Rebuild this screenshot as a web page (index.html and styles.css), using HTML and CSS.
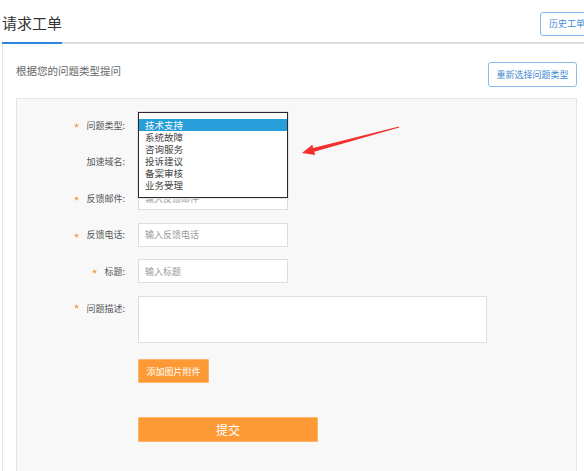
FILE: index.html
```html
<!DOCTYPE html>
<html lang="zh-CN">
<head>
<meta charset="utf-8">
<title>请求工单</title>
<link rel="stylesheet" href="styles.css">
</head>
<body>
<div class="page">
  <header class="header">
    <h1 class="title">请求工单</h1>
    <button class="btn-outline btn-history">历史工单</button>
  </header>
  <section class="panel">
    <div class="subrow">
      <p class="subtitle">根据您的问题类型提问</p>
      <button class="btn-outline btn-reselect">重新选择问题类型</button>
    </div>
    <div class="form-area">
      <div class="form-grid">
        <label class="label"><svg class="star" viewBox="0 0 10 10"><polygon points="5,0 6.2,3.6 10,3.6 6.9,5.8 8.1,9.5 5,7.2 1.9,9.5 3.1,5.8 0,3.6 3.8,3.6" fill="#f39a43"/></svg>问题类型:</label>
        <div class="field">
          <div class="input select-box"></div>
          <ul class="dropdown">
            <li class="active">技术支持</li>
            <li>系统故障</li>
            <li>咨询服务</li>
            <li>投诉建议</li>
            <li>备案审核</li>
            <li>业务受理</li>
          </ul>
        </div>

        <label class="label">加速域名:</label>
        <div class="field"><div class="input"></div></div>

        <label class="label"><svg class="star" viewBox="0 0 10 10"><polygon points="5,0 6.2,3.6 10,3.6 6.9,5.8 8.1,9.5 5,7.2 1.9,9.5 3.1,5.8 0,3.6 3.8,3.6" fill="#f39a43"/></svg>反馈邮件:</label>
        <div class="field"><div class="input"><span class="ph">输入反馈邮件</span></div></div>

        <label class="label"><svg class="star" viewBox="0 0 10 10"><polygon points="5,0 6.2,3.6 10,3.6 6.9,5.8 8.1,9.5 5,7.2 1.9,9.5 3.1,5.8 0,3.6 3.8,3.6" fill="#f39a43"/></svg>反馈电话:</label>
        <div class="field"><div class="input"><span class="ph">输入反馈电话</span></div></div>

        <label class="label"><svg class="star" viewBox="0 0 10 10"><polygon points="5,0 6.2,3.6 10,3.6 6.9,5.8 8.1,9.5 5,7.2 1.9,9.5 3.1,5.8 0,3.6 3.8,3.6" fill="#f39a43"/></svg>标题:</label>
        <div class="field"><div class="input"><span class="ph">输入标题</span></div></div>

        <label class="label label-top"><svg class="star" viewBox="0 0 10 10"><polygon points="5,0 6.2,3.6 10,3.6 6.9,5.8 8.1,9.5 5,7.2 1.9,9.5 3.1,5.8 0,3.6 3.8,3.6" fill="#f39a43"/></svg>问题描述:</label>
        <div class="field"><div class="textarea"></div></div>

        <div></div>
        <div class="field"><button class="btn-orange btn-attach">添加图片附件</button></div>

        <div></div>
        <div class="field"><button class="btn-orange btn-submit">提交</button></div>
      </div>
    </div>
  </section>
  <svg class="arrow" width="102" height="36" viewBox="0 0 102 36">
    <polygon points="2,29 12.3,20.8 13.2,24 99,2.6 99.2,3.4 14.2,27.8 15.2,31" fill="#f2302c"/>
  </svg>
</div>
</body>
</html>
```

FILE: styles.css
```css
* { box-sizing: border-box; }
html, body {
  margin: 0;
  padding: 0;
  background: #fff;
  overflow: hidden;
}
body {
  font-family: "Noto Sans CJK SC", "Microsoft YaHei", "Liberation Sans", sans-serif;
  color: #555;
}
.page {
  position: relative;
  width: 584px;
  height: 471px;
  padding-left: 2px;
  overflow: hidden;
}
.header {
  display: flex;
  justify-content: space-between;
  align-items: flex-start;
  height: 44px;
  border-bottom: 2px solid #dcdcdc;
}
.title {
  margin: 0 0 -2px 0;
  height: 44px;
  padding-top: 12px;
  font-size: 15px;
  line-height: 22px;
  font-weight: normal;
  color: #333;
  border-bottom: 2px solid #2a86e0;
}
.btn-outline {
  font-family: inherit;
  background: #fff;
  border: 1px solid #86bdec;
  border-radius: 3px;
  color: #3f89d2;
  font-size: 9px;
  line-height: 22px;
  padding: 0 8px;
  cursor: pointer;
}
.btn-history {
  margin-top: 12px;
  height: 24px;
  width: 54px;
  margin-right: -10px;
}
.panel {
  border-left: 1px solid #e6e6e6;
  padding: 0 7px 0 13px;
  height: 430px;
}
.subrow {
  display: flex;
  justify-content: space-between;
  align-items: flex-start;
  padding-top: 18px;
  height: 54px;
}
.subtitle {
  margin: 0;
  font-size: 10.5px;
  line-height: 18px;
  color: #666;
}
.btn-reselect {
  height: 25px;
  width: 89px;
  padding: 0;
}
.form-area {
  background: #f8f8f8;
  border: 1px solid #e6e6e6;
  padding-top: 14px;
  height: 400px;
}
.form-grid {
  display: grid;
  grid-template-columns: 108px 1fr;
  column-gap: 13px;
  row-gap: 12.5px;
}
.label {
  display: flex;
  align-items: center;
  justify-content: flex-end;
  height: 24px;
  font-size: 9px;
  color: #555;
  white-space: nowrap;
}
.label-top {
  align-items: flex-start;
  height: auto;
  padding-top: 7px;
  line-height: 12px;
}
.star {
  width: 5px;
  height: 5px;
  margin-right: 7px;
  margin-top: 1px;
}
.field {
  position: relative;
}
.input {
  width: 150px;
  height: 24px;
  background: #fff;
  border: 1px solid #dedede;
  padding-left: 6px;
  display: flex;
  align-items: center;
}
.ph {
  font-size: 9px;
  color: #999;
}
.textarea {
  width: 349px;
  height: 47px;
  background: #fff;
  border: 1px solid #dedede;
  margin-top: 0.5px;
}
.dropdown {
  position: absolute;
  top: -1px;
  left: 0;
  width: 150px;
  height: 85.5px;
  margin: 0;
  padding: 5.5px 0 0 0;
  list-style: none;
  background: #fff;
  border: 1.5px solid #2a2a2a;
  box-shadow: 0 0 0 1px #e4e4e4;
  z-index: 2;
}
.dropdown li {
  height: 12.2px;
  line-height: 12.2px;
  font-size: 9.5px;
  padding-left: 6px;
  color: #444;
  white-space: nowrap;
}
.dropdown li.active {
  background: #279ed9;
  color: #fff;
}
.btn-orange {
  font-family: inherit;
  background: #fe9a35;
  border: 1px solid #ffb36a;
  border-radius: 1px;
  color: #fff;
  cursor: pointer;
  padding: 0;
}
.btn-attach {
  width: 71px;
  height: 24px;
  font-size: 9px;
  margin-top: -0.5px;
}
.btn-submit {
  width: 180px;
  height: 25px;
  font-size: 12px;
  margin-top: 21px;
}
.arrow {
  position: absolute;
  left: 300px;
  top: 124px;
  z-index: 3;
}
```
